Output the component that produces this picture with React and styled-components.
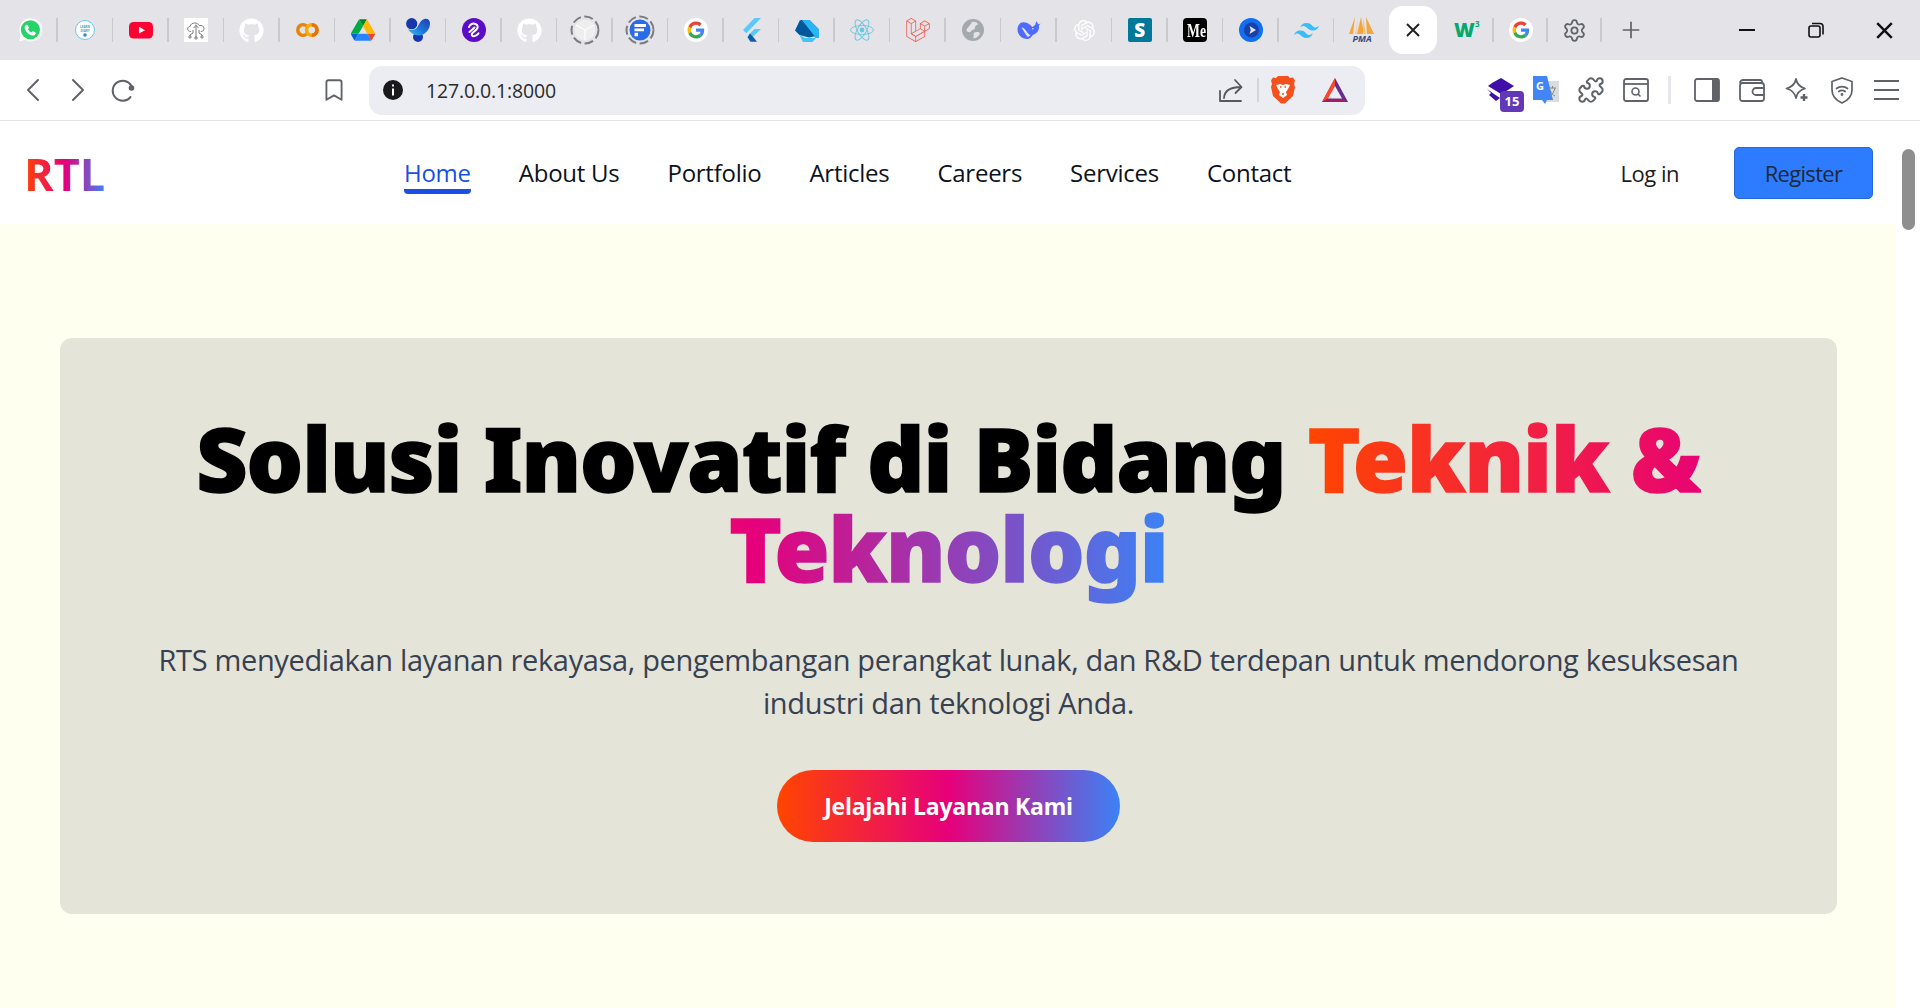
import React from 'react';
import styled, { createGlobalStyle } from 'styled-components';
import { FaGithub } from 'react-icons/fa';
import { SiLaravel, SiOpenai, SiTailwindcss } from 'react-icons/si';
import { Settings, Plus, Puzzle, Bookmark } from 'lucide-react';

const GlobalStyle = createGlobalStyle`
  html, body {
    margin: 0;
    padding: 0;
    height: 100%;
    overflow: hidden;
    background: #fff;
  }
  * { box-sizing: border-box; }
  body { font-family: "Open Sans", "Noto Sans", sans-serif; }
`;

const brandGradient = 'linear-gradient(to right, #ff4500, #e6007a, #3b82f6)';

const Window = styled.div`
  width: 1920px;
  height: 1008px;
  display: flex;
  flex-direction: column;
  overflow: hidden;
`;

const TabStrip = styled.div`
  height: 60px;
  flex: none;
  background: #e3e3e8;
  display: flex;
  align-items: center;
  padding-left: 2px;
`;

const Slot = styled.div`
  position: relative;
  width: ${(p) => p.$w || 55.5}px;
  height: 48px;
  flex: none;
  display: flex;
  align-items: center;
  justify-content: center;

  &::after {
    content: '';
    display: ${(p) => (p.$noSep ? 'none' : 'block')};
    position: absolute;
    right: 0;
    top: 12px;
    width: 1.5px;
    height: 24px;
    background: #c9c9ce;
  }
`;

const ActiveTab = styled.div`
  width: 48px;
  height: 48px;
  flex: none;
  border-radius: 14px;
  background: #fff;
  display: flex;
  align-items: center;
  justify-content: center;
  color: #222;
`;

const TabGap = styled.div`
  width: 3px;
  flex: none;
`;

const WindowControls = styled.div`
  margin-left: auto;
  display: flex;
  align-items: center;
  padding-right: 1px;
`;

const WindowButton = styled.div`
  width: 69px;
  height: 48px;
  display: flex;
  align-items: center;
  justify-content: center;
`;

const Toolbar = styled.div`
  height: 61px;
  flex: none;
  background: #fff;
  border-bottom: 1px solid #e3e3e8;
  display: flex;
  align-items: center;
  padding-left: 25px;
`;

const NavIcon = styled.div`
  width: ${(p) => p.$w || 45}px;
  height: 30px;
  flex: none;
  display: flex;
  align-items: center;
  color: #5f6368;
`;

const AddressBar = styled.div`
  width: 996px;
  height: 49px;
  margin-left: 19px;
  flex: none;
  background: #ecedf2;
  border-radius: 13px;
  display: flex;
  align-items: center;
  padding: 0 16px 0 14px;
`;

const Url = styled.span`
  margin-left: 23px;
  font-family: "Open Sans", sans-serif;
  font-size: 19.5px;
  letter-spacing: -0.15px;
  color: #2a2b2e;
`;

const AddressEnd = styled.div`
  margin-left: auto;
  display: flex;
  align-items: center;
`;

const BarDivider = styled.div`
  width: 2px;
  height: 24px;
  background: #d4d5da;
  margin: 0 12px 0 13px;
`;

const BatSlot = styled.div`
  margin-left: 26px;
  display: flex;
`;

const ExtensionTray = styled.div`
  margin-left: 113px;
  display: flex;
  align-items: center;
`;

const ExtIcon = styled.div`
  position: relative;
  width: 45px;
  height: 30px;
  flex: none;
  display: flex;
  align-items: center;
  justify-content: center;
  color: #5f6368;
`;

const CountBadge = styled.span`
  position: absolute;
  right: -1px;
  bottom: -7px;
  width: 24px;
  height: 21px;
  border-radius: 4px;
  background: #6338b8;
  color: #fff;
  font-family: "Open Sans", sans-serif;
  font-weight: 700;
  font-size: 13px;
  line-height: 21px;
  text-align: center;
`;

const TrayDivider = styled.div`
  width: 3px;
  height: 28px;
  margin: 0 13px 0 10px;
  background: #e6e6ec;
`;

const Content = styled.div`
  flex: 1;
  min-height: 0;
  display: flex;
`;

const Viewport = styled.div`
  flex: 1;
  min-width: 0;
  display: flex;
  flex-direction: column;
`;

const Scrollbar = styled.div`
  width: 24px;
  flex: none;
  background: #fff;
  padding: 28px 5px 0 6px;
`;

const ScrollThumb = styled.div`
  height: 81px;
  border-radius: 7px;
  background: #8e8e8e;
`;

const Navbar = styled.header`
  height: 103px;
  flex: none;
  background: #fff;
  display: flex;
  align-items: center;
  padding: 0 23px 0 24px;
`;

const Logo = styled.div`
  width: 380px;
  flex: none;
  font-size: 45px;
  font-weight: 700;
  line-height: 1;
  letter-spacing: 0;
  transform: translateY(1px);

  span {
    background: ${brandGradient};
    -webkit-background-clip: text;
    background-clip: text;
    color: transparent;
  }
`;

const NavLinks = styled.nav`
  display: flex;
  gap: 48px;
`;

const NavLink = styled.a`
  position: relative;
  font-size: 24px;
  font-weight: 500;
  line-height: 32px;
  letter-spacing: -0.26px;
  padding-bottom: 2px;
  transform: translateY(1px);
  color: ${(p) => (p.$active ? '#1a4fe6' : '#0b1220')};
  text-decoration: none;

  &::after {
    content: '';
    display: ${(p) => (p.$active ? 'block' : 'none')};
    position: absolute;
    left: 0;
    right: 0;
    bottom: -3px;
    height: 5px;
    background: #1a4fe6;
    border-radius: 0 0 4px 4px;
  }
`;

const Actions = styled.div`
  margin-left: auto;
  display: flex;
  align-items: center;
  gap: 55px;
`;

const LoginLink = styled.a`
  font-size: 22px;
  letter-spacing: -0.5px;
  color: #1c1c1c;
`;

const RegisterButton = styled.button`
  width: 139px;
  height: 52px;
  border: 1px solid #2569d8;
  border-radius: 5px;
  background: #2d7cff;
  color: #1f2937;
  font-family: inherit;
  font-size: 22px;
  letter-spacing: -0.7px;
`;

const Hero = styled.main`
  flex: 1;
  min-height: 0;
  background: #fffff0;
  padding: 114px 59px 0 60px;
`;

const HeroCard = styled.section`
  height: 576px;
  border-radius: 12px;
  background: #e4e4d9;
  display: flex;
  flex-direction: column;
  align-items: center;
  padding-top: 75px;
`;

const Title = styled.h1`
  margin: 0;
  width: 1600px;
  font-family: "Noto Sans", sans-serif;
  font-size: 89px;
  font-weight: 900;
  line-height: 90px;
  letter-spacing: -1.05px;
  text-align: center;
  color: #000;
  -webkit-text-stroke: 1.5px #000;

  span {
    background: ${brandGradient};
    -webkit-background-clip: text;
    background-clip: text;
    color: transparent;
    -webkit-text-stroke: 1.5px transparent;
  }
`;

const Lead = styled.p`
  margin: 45px 0 0;
  width: 1640px;
  font-size: 29px;
  line-height: 43px;
  letter-spacing: -0.34px;
  text-align: center;
  color: #374151;
`;

const CallToAction = styled.button`
  margin-top: 46px;
  width: 343px;
  height: 72px;
  border: none;
  border-radius: 36px;
  background: ${brandGradient};
  color: #fff;
  font-family: inherit;
  font-size: 23px;
  font-weight: 700;
  letter-spacing: -0.25px;
`;

const Svg = ({ size = 24, box = 24, children }) => (
  <svg width={size} height={size} viewBox={`0 0 ${box} ${box}`} fill="none">
    {children}
  </svg>
);

const Whatsapp = () => (
  <Svg>
    <path d="M1 23.5l1.7-6.1A11.6 11.6 0 1 1 7 21.8L1 23.5z" fill="#fff" />
    <circle cx="12.4" cy="11.8" r="9.6" fill="#25d366" />
    <path d="M8.8 6.8c.5 0 1 .1 1.2.7l.8 1.9c.1.4 0 .7-.3 1l-.6.8c.8 1.5 2 2.7 3.7 3.4l.8-1c.3-.3.6-.4 1-.2l1.8.9c.4.2.6.6.5 1-.3 1.5-1.5 2.4-3 2.3-3.8-.5-7.3-3.7-8-7.5-.2-1.3.5-2.9 2.1-3.3z" fill="#fff" />
  </Svg>
);

const LearnDiary = () => (
  <Svg>
    <circle cx="12" cy="12" r="9.5" fill="#fff" stroke="#5cc3ea" strokeWidth="0.9" />
    <text x="12" y="10" textAnchor="middle" fontSize="3" fontWeight="700" fontFamily="Open Sans" fill="#39a8a8">LEARN</text>
    <text x="12" y="13.5" textAnchor="middle" fontSize="3" fontWeight="700" fontFamily="Open Sans" fill="#39a8a8">DIARY</text>
    <circle cx="12" cy="17" r="1.8" fill="#2b8fd0" />
  </Svg>
);

const Youtube = () => (
  <Svg>
    <rect x="0" y="4" width="24" height="16.5" rx="4.5" fill="#ff0033" />
    <path d="M10 8.8l6 3.4-6 3.4z" fill="#fff" />
  </Svg>
);

const CloudChip = () => (
  <Svg>
    <rect width="24" height="24" rx="1" fill="#fff" />
    <g stroke="#6b6b6b" strokeWidth="0.9" fill="none">
      <path d="M7 13.5c-2.6 0-3.5-1.5-3.3-3 .2-1.3 1.2-2 2.4-2 .4-2.5 2.5-3.5 4.6-3.5 2.4 0 3.5 1 4.5 2.5 2.5-.5 4.8.8 4.8 3.2 0 1.7-1 2.8-3.2 2.8" />
      <path d="M12 6.5v13M9.5 10L12 7.5 14.5 10M9 12v3l-3 2v1M15 12v3l3 2v1" />
      <circle cx="6" cy="19" r="1.2" /><circle cx="12" cy="20" r="1.2" /><circle cx="18" cy="19" r="1.2" />
    </g>
  </Svg>
);

const Colab = () => (
  <Svg>
    <path d="M11.6 8a5.3 5.3 0 1 0 0 8" stroke="#e8830a" strokeWidth="3.6" />
    <circle cx="16.8" cy="12" r="5.2" stroke="#f9ab00" strokeWidth="3.6" />
    <path d="M16.8 6.8a5.2 5.2 0 0 1 0 10.4" stroke="#e8710a" strokeWidth="3.6" />
  </Svg>
);

const Drive = () => (
  <svg width="24" height="22" viewBox="0 0 87.3 78">
    <path d="m6.6 66.85 3.85 6.65c.8 1.4 1.95 2.5 3.3 3.3l13.75-23.8h-27.5c0 1.55.4 3.1 1.2 4.5z" fill="#0066da" />
    <path d="m43.65 25-13.75-23.8c-1.35.8-2.5 1.9-3.3 3.3l-25.4 44a9.06 9.06 0 0 0 -1.2 4.5h27.5z" fill="#00ac47" />
    <path d="m73.55 76.8c1.35-.8 2.5-1.9 3.3-3.3l1.6-2.75 7.65-13.25c.8-1.4 1.2-2.95 1.2-4.5h-27.502l5.852 11.5z" fill="#ea4335" />
    <path d="m43.65 25 13.75-23.8c-1.35-.8-2.9-1.2-4.5-1.2h-18.5c-1.6 0-3.15.45-4.5 1.2z" fill="#00832d" />
    <path d="m59.8 53h-32.3l-13.75 23.8c1.35.8 2.9 1.2 4.5 1.2h50.8c1.6 0 3.15-.45 4.5-1.2z" fill="#2684fc" />
    <path d="m73.4 26.5-12.7-22c-.8-1.4-1.95-2.5-3.3-3.3l-13.75 23.8 16.15 28h27.45c0-1.55-.4-3.1-1.2-4.5z" fill="#ffba00" />
  </svg>
);

const BlueY = () => (
  <Svg>
    <defs>
      <linearGradient id="swoosh" x1="0" y1="1" x2="1" y2="0">
        <stop offset="0" stopColor="#35c5ee" />
        <stop offset="0.5" stopColor="#1f6fd8" />
        <stop offset="1" stopColor="#1c3fb0" />
      </linearGradient>
    </defs>
    <circle cx="5.7" cy="5.7" r="5.6" fill="#1637ad" />
    <circle cx="12" cy="19" r="5" fill="#1637ad" />
    <path d="M2 11c4 1.8 7.5 1 9.5-2 1.8-3 3-7 7-8 3.2-.8 5.5 1.5 5.5 4.5 0 6-5.5 12-11 12-5 0-9-3-11-6.5z" fill="url(#swoosh)" />
  </Svg>
);

const PurpleLoop = () => (
  <Svg>
    <circle cx="12" cy="12" r="12" fill="#5c0cc6" />
    <path d="M7 9c1-3 4-4 6.5-3 2.5 1 3 3.5 1 5.5l-4 3.5c-1.5 1.5-.5 3.5 1.5 3.3 1.8-.2 3-1 4.5-3" stroke="#fff" strokeWidth="2" strokeLinecap="round" />
    <path d="M7.5 14l5-4.5" stroke="#fff" strokeWidth="2" strokeLinecap="round" />
  </Svg>
);

const DashedRing = ({ children }) => (
  <svg width="30" height="30" viewBox="0 0 30 30" fill="none">
    <circle cx="15" cy="15" r="13.5" stroke="#7d7d80" strokeWidth="2" strokeDasharray="9 3.5" />
    {children}
  </svg>
);

const Cube = () => (
  <DashedRing>
    <circle cx="15" cy="15" r="10.5" fill="#eeeeee" />
    <path d="M15 15V25M15 15L6 10M15 15l9-5" stroke="#fff" strokeWidth="1.2" />
  </DashedRing>
);

const FormIcon = () => (
  <DashedRing>
    <circle cx="15" cy="15" r="10.5" fill="#2b6be8" />
    <path d="M9.5 9h11.5v3H9.5zM9.5 13.5h9.5v2.8H9.5zM9.5 17.8h3.5v3.5H9.5z" fill="#fff" />
  </DashedRing>
);

const GoogleG = () => (
  <svg width="24" height="24" viewBox="0 0 48 48">
    <circle cx="24" cy="24" r="24" fill="#fff" />
    <g transform="translate(7 7) scale(0.71)">
      <path d="M24 9.5c3.54 0 6.71 1.22 9.21 3.6l6.85-6.85C35.9 2.38 30.47 0 24 0 14.62 0 6.51 5.38 2.56 13.22l7.98 6.19C12.43 13.72 17.74 9.5 24 9.5z" fill="#EA4335" />
      <path d="M46.98 24.55c0-1.57-.15-3.09-.38-4.55H24v9.02h12.94c-.58 2.96-2.26 5.48-4.78 7.18l7.73 6c4.51-4.18 7.09-10.36 7.09-17.65z" fill="#4285F4" />
      <path d="M10.53 28.59c-.48-1.45-.76-2.99-.76-4.59s.27-3.14.76-4.59l-7.98-6.19C.92 16.46 0 20.12 0 24c0 3.88.92 7.54 2.56 10.78l7.97-6.19z" fill="#FBBC05" />
      <path d="M24 48c6.48 0 11.93-2.13 15.89-5.81l-7.73-6c-2.15 1.45-4.92 2.3-8.16 2.3-6.26 0-11.57-4.22-13.47-9.91l-7.98 6.19C6.51 42.62 14.62 48 24 48z" fill="#34A853" />
    </g>
  </svg>
);

const Flutter = () => (
  <Svg>
    <path d="M4 12L15.5 0H22L7.3 15.3z" fill="#5ac8fa" />
    <path d="M9.5 17L15.5 11H22L14 18.8z" fill="#5ac8fa" />
    <path d="M11 15.5L14 18.8l4 5h-6.5l-3-4.5z" fill="#0d5da8" />
  </Svg>
);

const Dart = () => (
  <Svg>
    <path d="M0 12.5L5 2l16 16-7 1.5L4.5 17z" fill="#01579b" />
    <path d="M5 2h9.5L24 11.5V20L21 20z" fill="#01579b" />
    <path d="M7 2h7.5L24 11.5v8.5h-3z" fill="#29b6f6" />
    <path d="M4.5 17L8 24h9.5L21 20H10z" fill="#40c4ff" />
  </Svg>
);

const ReactAtom = () => (
  <Svg>
    <g stroke="#6cc6de" strokeWidth="0.9">
      <ellipse cx="12" cy="12" rx="11.5" ry="4.5" />
      <ellipse cx="12" cy="12" rx="11.5" ry="4.5" transform="rotate(60 12 12)" />
      <ellipse cx="12" cy="12" rx="11.5" ry="4.5" transform="rotate(120 12 12)" />
    </g>
    <circle cx="12" cy="12" r="2.4" fill="#6cc6de" />
  </Svg>
);

const Globe = () => (
  <Svg size={22}>
    <circle cx="12" cy="12" r="12" fill="#a4a9ae" />
    <path d="M11 3c3.5-.6 6 1 6.5 3-2 .5-3.5 2-3.5 4s-3 1-4 3-3 1.5-5 0c-1-2 2-4 3-5.5S10 5 11 3zM13 15c2-1 5-1 6.5.5-.5 3-4 5.5-7.5 5.5 1.5-2 0-4 1-6z" fill="#e3e3e8" />
  </Svg>
);

const Whale = () => (
  <Svg>
    <path d="M23.5 5.5c-.7.5-1.5.6-2.3.8-.6-.9-1.2-1.8-1.4-3-1 .9-1.4 2.2-1.4 3.4-1 1-2.2 1.6-3.2 2.3-2-3.1-5.5-4.7-9-4.8C3 4.2.5 7.5.5 11.5.5 17 5.5 21.5 11 21c1.5-.2 3.5-2 5-4.3 2-.4 4.5-2.3 5.5-4.7.6-1.5.8-3 .3-4.5.8-.5 1.3-1.3 1.700-2z" fill="#4d6bfe" />
    <path d="M4.5 9.5c2 .2 3.500 1.500 5 4 1.200 2 2.500 3 4 3.500-1 1.200-2 1.800-3 1.800-1.800-2.500-4-6-6-9.300z" fill="#e3e3e8" />
    <circle cx="15.8" cy="10.8" r=".8" fill="#e3e3e8" />
  </Svg>
);

const SearchSquare = styled.div`
  width: 24px;
  height: 24px;
  border-radius: 2px;
  background: #00789a;
  color: #fff;
  font-family: "Open Sans", sans-serif;
  font-weight: 800;
  font-size: 19px;
  line-height: 24px;
  text-align: center;
`;

const MediumSquare = styled.div`
  width: 24px;
  height: 24px;
  border-radius: 4px;
  overflow: hidden;
  background: #000;
  padding-left: 4px;
`;

const MediumMark = styled.span`
  display: block;
  width: 30px;
  color: #fff;
  font-family: "Liberation Serif", serif;
  font-weight: 700;
  font-size: 19px;
  line-height: 25px;
  white-space: nowrap;
  transform: scaleX(0.72);
  transform-origin: left center;
`;

const BluePlay = () => (
  <Svg>
    <circle cx="12" cy="12" r="12" fill="#0f6ff0" />
    <circle cx="12.5" cy="12" r="7.5" fill="#1a3fa8" />
    <path d="M10.5 8l6.5 4-6.5 4 1.3-4z" fill="#dfe8ff" />
  </Svg>
);

const Pma = () => (
  <svg width="32" height="26" viewBox="0 0 32 26">
    <path d="M9 0l-2 17H3z M15 0l-4 17h7z M20 0l1 17h7z" fill="#f6a53a" />
    <path d="M12 2l-2 15H9z M17 1l3 16h-3z" fill="#fbc47a" />
    <text x="16" y="25" textAnchor="middle" fontSize="9" fontWeight="700" fontStyle="italic" fontFamily="Open Sans" fill="#3b4a7a">PMA</text>
  </svg>
);

const W3 = () => (
  <svg width="28" height="24" viewBox="0 0 28 24">
    <text x="1" y="19" fontSize="20" fontWeight="800" fontFamily="Open Sans" fill="#04aa6d">W</text>
    <text x="22" y="9" fontSize="8" fontWeight="700" fontFamily="Open Sans" fill="#04aa6d">3</text>
  </svg>
);

const CloseMark = ({ size = 14, color = '#222', weight = 2 }) => (
  <svg width={size} height={size} viewBox="0 0 14 14">
    <path d="M1 1l12 12M13 1L1 13" stroke={color} strokeWidth={weight} />
  </svg>
);

const favicons = [
  <Whatsapp />, <LearnDiary />, <Youtube />, <CloudChip />, <FaGithub size={25} color="#fff" />,
  <Colab />, <Drive />, <BlueY />, <PurpleLoop />, <FaGithub size={25} color="#fff" />,
  <Cube />, <FormIcon />, <GoogleG />, <Flutter />, <Dart />, <ReactAtom />,
  <SiLaravel size={24} color="#f55247" />, <Globe />, <Whale />, <SiOpenai size={21} color="#fff" />,
  <SearchSquare>S</SearchSquare>, <MediumSquare><MediumMark>Me</MediumMark></MediumSquare>, <BluePlay />,
  <SiTailwindcss size={25} color="#38bdf8" />, <Pma />,
];

const navItems = ['Home', 'About Us', 'Portfolio', 'Articles', 'Careers', 'Services', 'Contact'];

const Chevron = ({ d }) => (
  <svg width="16" height="24" viewBox="0 0 16 24">
    <path d={d} stroke="#5f6368" strokeWidth="2" fill="none" strokeLinecap="round" strokeLinejoin="round" />
  </svg>
);

const Reload = () => (
  <svg width="26" height="26" viewBox="0 0 26 26" fill="none">
    <path d="M20.5 20a10 10 0 1 1 1-11" stroke="#5f6368" strokeWidth="2" strokeLinecap="round" />
    <circle cx="21.5" cy="11" r="2.8" fill="#5f6368" />
  </svg>
);

const Share = () => (
  <svg width="26" height="26" viewBox="0 0 26 26" fill="none" stroke="#55585e" strokeWidth="1.8" strokeLinecap="round" strokeLinejoin="round">
    <path d="M2 14v10h21" />
    <path d="M6 21c.5-7 5-11 17-11M17 3l6.5 7-6 6" />
  </svg>
);

const Brave = () => (
  <svg width="24" height="28" viewBox="0 0 24 28">
    <path d="M7 0h10l2 2 3-.5 2 3-1 3.5 1 3-2 9-8 7.5h-4l-8-7.5-2-9 1-3L0 4.500l2-3L5 2z" fill="#f4511e" />
    <path d="M5 9l4-1 3 1 3-1 4 1-2 4-2 3 1 3-4 3-4-3 1-3-2-3z" fill="#fff" />
    <path d="M9 11h1.5M13.5 11H15M11 18h2" stroke="#f4511e" strokeWidth="1.5" />
  </svg>
);

const Bat = () => (
  <svg width="28" height="26" viewBox="0 0 28 26">
    <path d="M14 1L1 25h26z" fill="#662d91" />
    <path d="M14 1L1 25l6-3.5L14 9z" fill="#ff4724" />
    <path d="M1 25h26l-6-3.5H7z" fill="#9e1f63" />
    <path d="M14 9l7 12.5H7z" fill="#ecedf2" />
  </svg>
);

const GradCap = () => (
  <svg width="30" height="26" viewBox="0 0 30 26">
    <path d="M15 1l13 8-6 4-7 4-13-8 4-3z" fill="#3f0fa8" />
    <path d="M1 12l7 5 6 4-4 3-7-6 2-2z" fill="#3f0fa8" />
  </svg>
);

const Translate = () => (
  <svg width="26" height="28" viewBox="0 0 26 28">
    <path d="M12 5h14v21H12z" fill="#dcdcdc" />
    <path d="M0 0h14l6 24h-6l-2 4-3-4H0z" fill="#4285f4" />
    <text x="3" y="14" fontSize="11" fontWeight="700" fontFamily="Open Sans" fill="#fff">G</text>
    <path d="M16 12h7M19.5 10v2M22 12c-1 4-3 7-5 8M17 14c1 3 3 5 5 6" stroke="#7a8a94" strokeWidth="1" fill="none" />
  </svg>
);

const WindowSearch = () => (
  <svg width="26" height="24" viewBox="0 0 26 24" fill="none" stroke="#5f6368" strokeWidth="1.8">
    <rect x="1" y="1" width="24" height="22" rx="2" />
    <path d="M1 6h24" />
    <circle cx="12.5" cy="13.5" r="3.5" strokeWidth="1.6" />
    <path d="M15 16l2.5 2.5" strokeWidth="1.6" />
  </svg>
);

const SidePanel = () => (
  <svg width="26" height="24" viewBox="0 0 26 24" fill="none">
    <rect x="1" y="1" width="24" height="22" rx="2" stroke="#5f6368" strokeWidth="1.8" />
    <path d="M18 1h5a2 2 0 0 1 2 2v18a2 2 0 0 1-2 2h-5z" fill="#5f6368" />
  </svg>
);

const WalletIcon = () => (
  <svg width="26" height="24" viewBox="0 0 26 24" fill="none" stroke="#5f6368" strokeWidth="1.8">
    <path d="M1 5a3 3 0 0 1 3-3h17a2 2 0 0 1 2 2v2" />
    <rect x="1" y="5" width="24" height="18" rx="2.5" />
    <path d="M25 10h-8a3 3 0 0 0 0 7h8" />
  </svg>
);

const Sparkle = () => (
  <svg width="24" height="26" viewBox="0 0 24 26" fill="none">
    <path d="M11 2c1 5 4 8 9 9.5-5 1.500-8 4.500-9 9.500-1-5-4-8-9.500-9.500C7 10 10 7 11 2z" stroke="#5f6368" strokeWidth="1.8" strokeLinejoin="round" />
    <path d="M19 17v7M15.5 20.5h7" stroke="#5f6368" strokeWidth="2.4" />
  </svg>
);

const ShieldWifi = () => (
  <svg width="24" height="27" viewBox="0 0 24 27" fill="none" stroke="#5f6368" strokeWidth="1.7" strokeLinecap="round">
    <path d="M12 1l10 3.5V13c0 6-4.500 10.500-10 13C6.500 23.500 2 19 2 13V4.500z" />
    <path d="M6.5 11.5c3-2.500 8-2.500 11 0M8.800 14.500c2-1.500 4.500-1.500 6.400 0" />
    <circle cx="12" cy="17.5" r=".6" fill="#5f6368" />
  </svg>
);

const MenuLines = () => (
  <svg width="25" height="22" viewBox="0 0 25 22">
    <path d="M0 2h25M0 11h25M0 20h25" stroke="#5f6368" strokeWidth="2" />
  </svg>
);

export default function App() {
  return (
    <Window>
      <GlobalStyle />
      <TabStrip>
        {favicons.map((icon, i) => (
          <Slot key={i} $noSep={i === 24}>{icon}</Slot>
        ))}
        <Slot $noSep $w={47}>
          <ActiveTab><CloseMark /></ActiveTab>
        </Slot>
        <TabGap />
        <Slot $w={54}><W3 /></Slot>
        <Slot $w={54}><GoogleG /></Slot>
        <Slot $w={54}><Settings size={25} color="#5f6368" strokeWidth={1.7} /></Slot>
        <Slot $noSep $w={58}><Plus size={26} color="#5f6368" strokeWidth={1.6} /></Slot>
        <WindowControls>
          <WindowButton>
            <svg width="16" height="2"><path d="M0 1h16" stroke="#111" strokeWidth="2" /></svg>
          </WindowButton>
          <WindowButton>
            <svg width="16" height="16" viewBox="0 0 16 16" fill="none" stroke="#111" strokeWidth="1.6">
              <rect x="1" y="4" width="11" height="11" rx="2" />
              <path d="M4 1.5h8a3 3 0 0 1 3 3v8" />
            </svg>
          </WindowButton>
          <WindowButton><CloseMark size={17} color="#111" /></WindowButton>
        </WindowControls>
      </TabStrip>

      <Toolbar>
        <NavIcon><Chevron d="M13 2L3 12l10 10" /></NavIcon>
        <NavIcon $w={40}><Chevron d="M3 2l10 10L3 22" /></NavIcon>
        <NavIcon $w={211}><Reload /></NavIcon>
        <NavIcon $w={29}><Bookmark size={26} strokeWidth={1.7} /></NavIcon>
        <AddressBar>
          <svg width="20" height="20" viewBox="0 0 20 20">
            <circle cx="10" cy="10" r="10" fill="#1a1a1c" />
            <path d="M10 4.5v2M10 8.500v7" stroke="#fff" strokeWidth="2" />
          </svg>
          <Url>127.0.0.1:8000</Url>
          <AddressEnd>
            <Share />
            <BarDivider />
            <Brave />
            <BatSlot><Bat /></BatSlot>
          </AddressEnd>
        </AddressBar>
        <ExtensionTray>
          <ExtIcon><GradCap /><CountBadge>15</CountBadge></ExtIcon>
          <ExtIcon><Translate /></ExtIcon>
          <ExtIcon><Puzzle size={28} strokeWidth={1.7} /></ExtIcon>
          <ExtIcon><WindowSearch /></ExtIcon>
          <TrayDivider />
          <ExtIcon><SidePanel /></ExtIcon>
          <ExtIcon><WalletIcon /></ExtIcon>
          <ExtIcon><Sparkle /></ExtIcon>
          <ExtIcon><ShieldWifi /></ExtIcon>
          <ExtIcon><MenuLines /></ExtIcon>
        </ExtensionTray>
      </Toolbar>

      <Content>
        <Viewport>
          <Navbar>
            <Logo><span>RTL</span></Logo>
            <NavLinks>
              {navItems.map((item, i) => (
                <NavLink key={item} $active={i === 0}>{item}</NavLink>
              ))}
            </NavLinks>
            <Actions>
              <LoginLink>Log in</LoginLink>
              <RegisterButton>Register</RegisterButton>
            </Actions>
          </Navbar>
          <Hero>
            <HeroCard>
              <Title>Solusi Inovatif di Bidang <span>Teknik &amp; Teknologi</span></Title>
              <Lead>RTS menyediakan layanan rekayasa, pengembangan perangkat lunak, dan R&amp;D terdepan untuk mendorong kesuksesan industri dan teknologi Anda.</Lead>
              <CallToAction>Jelajahi Layanan Kami</CallToAction>
            </HeroCard>
          </Hero>
        </Viewport>
        <Scrollbar><ScrollThumb /></Scrollbar>
      </Content>
    </Window>
  );
}
